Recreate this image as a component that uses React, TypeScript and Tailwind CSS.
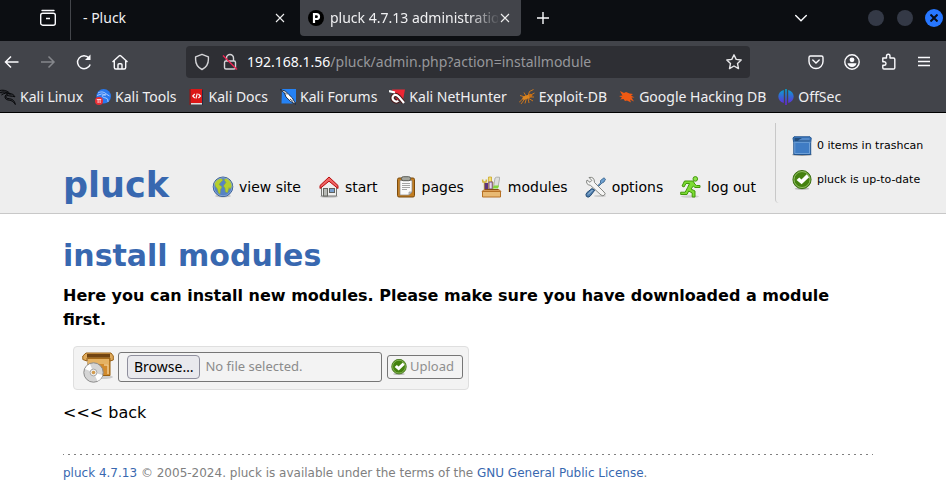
import { type ReactNode } from "react";

const uiFont = "font-['Noto_Sans',sans-serif]";

function Svg({ size = 18, box = 18, className = "", children }: { size?: number; box?: number; className?: string; children: ReactNode }) {
  return (
    <svg width={size} height={size} viewBox={`0 0 ${box} ${box}`} className={`shrink-0 ${className}`} fill="none" aria-hidden="true">
      {children}
    </svg>
  );
}

function CheckIcon({ size = 20 }: { size?: number }) {
  return (
    <Svg size={size} box={22}>
      <ellipse cx="11" cy="20.5" rx="8" ry="1.5" fill="#bbb" />
      <circle cx="11" cy="10.5" r="10" fill="#44820f" stroke="#376b0c" />
      <circle cx="11" cy="10.5" r="8.8" stroke="#9bc56d" strokeWidth="1" />
      <path d="M5 11 L8 8.3 L10.4 10.4 L16.2 4.8 L18.8 8 L10.6 15.8 Z" fill="#fff" />
    </Svg>
  );
}

function GlobeIcon() {
  return (
    <Svg size={22} box={22}>
      <ellipse cx="11" cy="20" rx="8" ry="1.5" fill="#c5c5c5" />
      <circle cx="11" cy="10.8" r="9.8" fill="#5683c4" stroke="#3b5f96" />
      <path d="M2.5 7 L5 4 L9 2.5 L11 4 L8.5 6.5 L7 8.5 L10 11 L8.5 13.5 L8 18 L6.5 17 L5.5 13 L3.5 10.5 Z M12 3.5 L15 2.5 L18.5 5.5 L20 10 L18 13 L17 11.5 L15.5 16.5 L13.5 16 L13 12 L11.5 10 L14 6.5 Z" fill="#b5cf2c" stroke="#91aa35" strokeWidth=".5" />
      <circle cx="11" cy="10.8" r="9" stroke="#9db9df" strokeWidth=".6" />
    </Svg>
  );
}

function HouseIcon() {
  return (
    <Svg size={22} box={22}>
      <ellipse cx="11" cy="20.5" rx="9" ry="1.3" fill="#c5c5c5" />
      <path d="M3.5 9 L11 3 L18.5 9 V20 H3.5 Z" fill="#f0f0ef" stroke="#747572" />
      <path d="M2 9.5 L11 1 L20 9.5 V12.5 L11 5.2 L2 12.5 Z" fill="#ef6464" stroke="#b90c0c" strokeLinejoin="round" />
      <rect x="5.5" y="12.5" width="4" height="7.5" fill="#b8bab6" stroke="#666862" />
      <rect x="11.5" y="12.5" width="5" height="4" fill="#79a0ce" stroke="#60625e" />
    </Svg>
  );
}

function ClipboardIcon() {
  return (
    <Svg size={22} box={22}>
      <rect x="2.5" y="2" width="17" height="19" rx="1.5" fill="#c17d22" stroke="#7b4a0b" />
      <path d="M5 4.5 H17 V16 L14 19 H5 Z" fill="#fafafa" stroke="#888" strokeWidth=".7" />
      <path d="M17 16 H14 V19 Z" fill="#c9c9c9" stroke="#888" strokeWidth=".6" />
      <rect x="6.5" y=".7" width="9" height="4" rx="1.8" fill="#a4a69e" stroke="#5c5e59" />
      <path d="M7 7.5 H15 M7 9.5 H15 M7 11.5 H15 M7 13.5 H12" stroke="#a4a4a4" />
    </Svg>
  );
}

function ModulesIcon() {
  return (
    <Svg size={22} box={22}>
      <path d="M7.5 1 H10.5 V6 H12 V14 H7 Z" fill="#f2df72" stroke="#c9a526" strokeWidth=".8" />
      <path d="M14 2 Q15 .7 18.5 1.2 V3 L17 11 H12.5 Z" fill="#dedfdd" stroke="#a1a39e" strokeWidth=".8" />
      <path d="M1.5 3.5 L2 6 H5 L5.5 3.5 M3.5 6 V13" stroke="#d1b53a" strokeWidth="1.5" />
      <rect x="3.5" y="7" width="3.5" height="6" fill="#5e347b" />
      <rect x="8" y="6" width="3.2" height="7" fill="#ead6ee" stroke="#63417b" strokeWidth=".9" />
      <path d="M11.5 12.5 L13 9.5 H18 L17 12.5 Z" fill="#83d63a" />
      <path d="M3 13.5 H18 L20 15.5 H1 Z" fill="#d79a54" stroke="#aa651b" strokeWidth=".8" />
      <path d="M1.5 15.5 H19.5 V21 H1.5 Z" fill="#e9ba74" stroke="#b77124" />
      <path d="M4 13.5 H17" stroke="#764413" strokeWidth=".8" />
    </Svg>
  );
}

function ToolsIcon() {
  return (
    <Svg size={22} box={22}>
      <ellipse cx="15" cy="20" rx="6" ry="1" fill="#ccc" />
      <path d="M8 14 L15.5 7 L15.5 4.5 L19 1.8 L20.5 3.2 L19 6 L17 7 L9.5 14.5 Z" fill="#6da0d0" stroke="#315d88" strokeWidth=".8" />
      <path d="M2 16.5 L7 12.5 L9.5 14.5 L5 20.3 Q3 22 1.3 20.3 Q.3 18.3 2 16.5 Z" fill="#4d7dad" stroke="#274d75" />
      <path d="M3 18.5 L7.5 14" stroke="#b4cee5" />
      <path d="M4 1.5 L6.8 4.3 L5 6.3 L2 4 Q.2 8.4 5.5 9.4 L16 19 Q18 20.5 19.5 19 Q21 17.5 19 16 L9.5 6.5 Q9.5 .3 4 1.5 Z" fill="#f5f5f4" stroke="#777975" strokeWidth=".9" />
    </Svg>
  );
}

function RunnerIcon() {
  return (
    <Svg size={22} box={22}>
      <ellipse cx="10" cy="20.5" rx="9" ry="1.3" fill="#cfcfcf" />
      <circle cx="15.3" cy="2.9" r="2.3" fill="#8ee34b" stroke="#42970a" />
      <path d="M4.5 5 H13 L15 8.3 L16.5 9.5 H20 V11.5 H15 L13.3 10 L11 13 L15 15 V21 H12.2 V17 L8.7 15 L7 18.5 H.7 V16.2 H5.2 L7.5 11.7 L9.5 7.5 H6 L4 11 L2 10 Z" fill="#7bdc32" stroke="#42970a" strokeLinejoin="round" />
    </Svg>
  );
}

function TrashIcon() {
  return (
    <Svg size={20} box={20}>
      <ellipse cx="10" cy="18.7" rx="10" ry="1.2" fill="#999" />
      <path d="M1 2 L2 .8 H18 L19.2 2 L18.7 7 V18.5 H1.8 V7 Z" fill="#3f7cc4" stroke="#23558f" strokeLinejoin="round" />
      <path d="M2.5 2 H17.8 V5.5 H2.5 Z" fill="#234e7e" />
      <path d="M10 2 H17.8 V4.5 H6 Z" fill="#548aca" />
      <path d="M1.5 6.3 H18.5 M2.8 7 V17.5 H17.5 V7" stroke="#7aa9dc" strokeWidth=".8" />
    </Svg>
  );
}

function PackageIcon() {
  return (
    <Svg size={32} box={32}>
      <ellipse cx="20" cy="26" rx="11" ry="2" fill="#ccc" />
      <path d="M6 7 H28 V24.5 H6 Z" fill="#d18a2d" stroke="#98600f" />
      <path d="M4 2 H29 L31.3 5 V9 L28 10 V7 H5 V10 L.8 8.5 V5 Z" fill="#dfaa5b" stroke="#996116" />
      <path d="M5 3 H28 V6.5 H5 Z" fill="#714411" />
      <path d="M6 8 H27 V13 H6 Z" fill="#e5b263" />
      <path d="M22 14 H26 V23" stroke="#f0ca8d" strokeWidth="1.5" />
      <circle cx="11.5" cy="21.5" r="9.7" fill="#d5d5d5" stroke="#8b8b8b" />
      <path d="M11.5 21.5 L3 18 A9.2 9.2 0 0 1 8 13 Z M11.5 21.5 L20.5 24 A9.2 9.2 0 0 1 15.5 30 Z" fill="#fff" />
      <circle cx="11.5" cy="21.5" r="3.4" fill="#eee" stroke="#aaa" />
      <circle cx="11.5" cy="21.5" r="1.8" fill="#d29b4d" />
    </Svg>
  );
}

const bookmarks: { label: string; icon: ReactNode }[] = [
  {
    label: "Kali Linux",
    icon: <Svg size={16} box={16}><path d="M0 1.5 C4 .5 8 2 10.5 5 C7 3.5 4 4 1.5 6 M0 3.8 C3 2.3 6 3 9 4.5 M9 4.8 L12.5 5 L15 7.8 L12.5 7.3 L9.5 7 C5 5.3 5 9.3 8 9.5 C12 9.8 14.5 11 15.3 15.5 C13 12 11 11.3 8 11 C4 10.5 4 5.5 8 5" stroke="#08090b" strokeWidth="1" fill="#08090b" fillOpacity=".25" /></Svg>,
  },
  {
    label: "Kali Tools",
    icon: <Svg size={16} box={16}><circle cx="8.7" cy="7.3" r="7.3" fill="#2878ee" /><path d="M3 4 C7 2 9 3 12 5.5 L14.5 7 M2 6.5 Q7 3.5 11 6 M10.5 6 C4 6 8 8.8 11 9 Q13.5 9.5 13 13" stroke="#a9caff" strokeWidth="1" /><circle cx="4" cy="12" r="4" fill="#e92f36" /><path d="M1.8 10.5 H6.2 M3.1 11 V14 M5.1 11 V14" stroke="#fff" strokeWidth=".8" /></Svg>,
  },
  {
    label: "Kali Docs",
    icon: <Svg size={16} box={16}><path d="M1.5 0 H13.5 V14 H1.5 Z" fill="#dc1717" /><path d="M2 14 H13.5 V15.5 H2 Z" fill="#ddd" /><path d="M1 0 V16" stroke="#9e1010" /><path d="M13.5 .5 V16" stroke="#222c45" /><path d="M5.8 5 L3.7 7 L5.8 9 M9.4 5 L11.5 7 L9.4 9 M8.3 4.5 L6.9 9.5" stroke="#fff" strokeWidth="1.1" /></Svg>,
  },
  {
    label: "Kali Forums",
    icon: <Svg size={16} box={16}><path d="M2 0 H16 V13 L12 14.5 H1.5 Z" fill="#2582f4" /><path d="M0 .5 L5.5 2.2 L9 5.7 L12.4 9 L16 15.5 L10.5 12.3 L6 8 L4.5 4 Z" fill="#fff" stroke="#17243a" strokeWidth=".9" /><path d="M5 3.5 L7 5.5 M10 10 L13 12.5" stroke="#192535" strokeWidth=".8" /></Svg>,
  },
  {
    label: "Kali NetHunter",
    icon: <Svg size={16} box={16}><path d="M3 .5 H16 L14 11 H8 Z" fill="#ee2634" /><path d="M14.5 13.5 L10.5 8.5 Q7 4.5 4.7 6.5 Q2.3 9 4.8 11.4 Q7.3 13.5 9.3 11.7" stroke="#4a1717" strokeWidth="4.2" /><path d="M15 14 L10.5 8.5 Q7 4.5 4.7 6.5 Q2.3 9 4.8 11.4 Q7.3 13.5 9.3 11.7 M0 2 L6 3.5" stroke="#fff" strokeWidth="2.2" /></Svg>,
  },
  {
    label: "Exploit-DB",
    icon: <Svg size={16} box={16}><path d="M0 13.5 L4 9.5 M2 15 L6 9.5 M6 14.5 L7.5 9 M10 14 L9 9 L14 12 M6 8 L1 6.5 M7 7 L5 3.5 M9 7 L10.5 2.5 L14.5 .5 M10 7 L15.5 4 M10 8 H15" stroke="#cc761c" strokeWidth="1" /><ellipse cx="7.5" cy="8.2" rx="4.5" ry="1.8" transform="rotate(-22 7.5 8.2)" fill="#dc8620" /><circle cx="11.5" cy="6.5" r="1.8" fill="#c97014" /></Svg>,
  },
  {
    label: "Google Hacking DB",
    icon: <Svg size={16} box={16}><path d="M1 2 L5 4 L7 3 L10.5 4.5 L14 5 L12 6.5 L15.5 8.5 L12.5 8.5 L15 12.5 L11 10.5 L12 13.5 L8 11.5 L6 12 L4.5 10 L1 10.5 L3 8.5 L0 7 L3.5 6.5 L2 4 Z" fill="#f15a13" /></Svg>,
  },
  {
    label: "OffSec",
    icon: (
      <Svg size={16} box={16}>
        <defs><linearGradient id="offsec" x1="0" y1="0" x2="0" y2="1"><stop stopColor="#05a5d0" /><stop offset="1" stopColor="#6b20d9" /></linearGradient></defs>
        <path d="M5.8 1 V14 C-1.5 12 -1.5 3 5.8 1 Z M10.2 1 V14 C17.5 12 17.5 3 10.2 1 Z M7.2 0 H8.8 V16 H7.2 Z" fill="url(#offsec)" />
      </Svg>
    ),
  },
];

const nav: { label: string; icon: ReactNode }[] = [
  { label: "view site", icon: <GlobeIcon /> },
  { label: "start", icon: <HouseIcon /> },
  { label: "pages", icon: <ClipboardIcon /> },
  { label: "modules", icon: <ModulesIcon /> },
  { label: "options", icon: <ToolsIcon /> },
  { label: "log out", icon: <RunnerIcon /> },
];

function CloseIcon() {
  return <Svg size={10} box={10}><path d="M1 1 L9 9 M9 1 L1 9" stroke="#eee" strokeWidth="1.1" /></Svg>;
}

function TabBar() {
  return (
    <div className="flex h-[41px] items-start bg-[#0c0e12]">
      <div className="flex h-10 w-[71px] items-start justify-end border-r border-[#44464b] pr-[13px]">
        <button aria-label="Firefox View" className="flex h-9 items-center">
          <Svg><path d="M3 1.5 H15" stroke="#fbfbfe" strokeWidth="1.4" strokeLinecap="round" /><rect x="1.7" y="4.2" width="14.6" height="12" rx="2" stroke="#fbfbfe" strokeWidth="1.4" /><path d="M7 9.5 H11" stroke="#fbfbfe" strokeWidth="1.5" /></Svg>
        </button>
      </div>
      <div className="flex h-9 w-[229px] items-center justify-between pr-[15px] pl-3">
        <span>- Pluck</span>
        <button aria-label="Close tab"><CloseIcon /></button>
      </div>
      <div className="flex h-9 w-[221px] items-center rounded-b bg-[#42444a] pr-[11px] pl-2">
        <Svg size={16} box={16}><circle cx="8" cy="8" r="8" fill="#000" /><path d="M6 13 V4.2 H8.3 Q11 4.2 11 6.7 Q11 9 8.3 9 H6" stroke="#fff" strokeWidth="2.2" /></Svg>
        <span className="mr-0.5 ml-1.5 min-w-0 flex-1 overflow-hidden whitespace-nowrap [mask-image:linear-gradient(to_right,black_138px,transparent_170px)]">pluck 4.7.13 administration</span>
        <button aria-label="Close tab"><CloseIcon /></button>
      </div>
      <button aria-label="New tab" className="ml-4 flex h-9 items-center">
        <Svg size={12} box={12}><path d="M6 0 V12 M0 6 H12" stroke="#fbfbfe" strokeWidth="1.4" /></Svg>
      </button>
      <div className="ml-auto flex h-9 items-center">
        <button aria-label="List all tabs" className="mr-[61px]">
          <Svg size={12} box={12}><path d="M.7 3.5 L6 8.7 L11.3 3.5" stroke="#fbfbfe" strokeWidth="1.4" strokeLinecap="round" /></Svg>
        </button>
        <button aria-label="Minimize" className="mr-[13px] size-4 rounded-full bg-[#343946]" />
        <button aria-label="Maximize" className="mr-3 size-4 rounded-full bg-[#343946]" />
        <button aria-label="Close window" className="mr-[3px] flex size-[18px] items-center justify-center rounded-full bg-[#2777ff]">
          <Svg size={8} box={8}><path d="M.5 .5 L7.5 7.5 M7.5 .5 L.5 7.5" stroke="#080d18" strokeWidth="2" /></Svg>
        </button>
      </div>
    </div>
  );
}

function Toolbar() {
  return (
    <div className="flex h-[41px] items-center pr-[13px] pl-[3px]">
      <div className="flex w-[183px] items-center gap-[18px]">
        <button aria-label="Back"><Svg><path d="M15.5 9 H2.5 M8 3.5 L2.5 9 L8 14.5" stroke="#fbfbfe" strokeWidth="1.5" /></Svg></button>
        <button aria-label="Forward" disabled><Svg><path d="M2 9 H15 M9.5 3.5 L15 9 L9.5 14.5" stroke="#85878c" strokeWidth="1.5" /></Svg></button>
        <button aria-label="Reload"><Svg><path d="M14 5 A6.5 6.5 0 1 0 15.2 11.4" stroke="#fbfbfe" strokeWidth="1.5" /><path d="M15.5 1.5 V7 H10 Z" fill="#fbfbfe" /></Svg></button>
        <button aria-label="Home"><Svg><path d="M1.5 9 L8.3 2.7 Q9 2.1 9.7 2.7 L16.5 9 M3.3 8 V14.5 Q3.3 16 4.8 16 H13.2 Q14.7 16 14.7 14.5 V8 M7 16 V11.8 Q7 10.7 8.1 10.7 H9.9 Q11 10.7 11 11.8 V16" stroke="#fbfbfe" strokeWidth="1.4" /></Svg></button>
      </div>
      <div className="flex h-8 min-w-0 flex-1 items-center rounded bg-[#2e2f34] px-[7px]">
        <Svg><path d="M9 1.3 L15.4 3.8 V6.5 Q15.4 13.3 9 16.5 Q2.6 13.3 2.6 6.5 V3.8 Z" stroke="#d5d5d8" strokeWidth="1.4" strokeLinejoin="round" /></Svg>
        <Svg className="ml-2.5"><path d="M5.5 8 V5 A3.5 3.5 0 0 1 12.5 5 V8" stroke="#d5d5d8" strokeWidth="1.4" /><rect x="3.5" y="8" width="11" height="8" rx="1.5" stroke="#d5d5d8" strokeWidth="1.4" /><path d="M2 2.5 L16 16.5" stroke="#f02454" strokeWidth="1.4" /></Svg>
        <div className="ml-2 flex-1 text-[#fbfbfe]">192.168.1.56<span className="text-[#96979b]">/pluck/admin.php?action=installmodule</span></div>
        <button aria-label="Bookmark this page"><Svg><path d="M9 1.8 L11.2 6.4 L16.2 7 L12.5 10.4 L13.5 15.6 L9 13 L4.5 15.6 L5.5 10.4 L1.8 7 L6.8 6.4 Z" stroke="#e7e7e9" strokeWidth="1.4" strokeLinejoin="round" /></Svg></button>
      </div>
      <div className="ml-[57px] flex items-center gap-[18px]">
        <button aria-label="Save to Pocket"><Svg><path d="M3.5 3 H14.5 Q16 3 16 4.5 V8.5 A7 7 0 0 1 2 8.5 V4.5 Q2 3 3.5 3 Z M5.8 7 L9 10 L12.2 7" stroke="#fbfbfe" strokeWidth="1.4" strokeLinecap="round" /></Svg></button>
        <button aria-label="Account"><Svg><circle cx="9" cy="9" r="7.2" stroke="#fbfbfe" strokeWidth="1.4" /><circle cx="9" cy="6.8" r="2.4" fill="#fbfbfe" /><path d="M4.5 10.2 H13.5 Q12.5 14 9 14 Q5.5 14 4.5 10.2 Z" fill="#fbfbfe" /></Svg></button>
        <button aria-label="Extensions"><Svg><path d="M3.8 5 H7.5 V3.2 Q7.5 1.3 9.3 1.3 Q11 1.3 11 3.2 V5 H14.5 Q15.8 5 15.8 6.3 V14.7 Q15.8 16 14.5 16 H5 Q3.8 16 3.8 14.7 V12.3 H5.3 Q7 12.3 7 10.5 Q7 8.7 5.3 8.7 H3.8 Z" stroke="#fbfbfe" strokeWidth="1.4" strokeLinejoin="round" /></Svg></button>
        <button aria-label="Application menu"><Svg><path d="M3 4.5 H15 M3 8.5 H15 M3 12.5 H15" stroke="#fbfbfe" strokeWidth="1.4" /></Svg></button>
      </div>
    </div>
  );
}

export default function App() {
  return (
    <div className="min-h-screen bg-white font-['DejaVu_Sans',sans-serif] text-black">
      <div className={`${uiFont} overflow-hidden border-b border-black bg-[#42444a] text-sm leading-5 text-[#f0f0f2]`}>
        <TabBar />
        <Toolbar />
        <nav aria-label="Bookmarks" className="flex h-[30px] items-center gap-3 whitespace-nowrap">
          {bookmarks.map((b) => (
            <a key={b.label} href="#" className="flex items-center gap-1">
              {b.icon}
              {b.label}
            </a>
          ))}
        </nav>
      </div>

      <header className="flex h-[101px] border-b border-[#c8c8c8] bg-[#eee] pl-[63px]">
        <div className="w-[149px] pt-[51px] text-[35px] leading-[42px] font-bold text-[#3868b0]">pluck</div>
        <nav aria-label="Main" className="flex items-center gap-[17px] pt-12 text-sm whitespace-nowrap">
          {nav.map((n) => (
            <a key={n.label} href="#" className="flex items-center gap-[5px]">
              {n.icon}
              {n.label}
            </a>
          ))}
        </nav>
        <div className="mt-2.5 ml-auto flex h-20 w-[171px] flex-col justify-center gap-3.5 rounded-bl border-l border-[#c8c8c8] pl-4 text-[11px] whitespace-nowrap">
          <a href="#" className="flex items-center gap-[5px]"><TrashIcon />0 items in trashcan</a>
          <a href="#" className="flex items-center gap-[5px]"><CheckIcon />pluck is up-to-date</a>
        </div>
      </header>

      <main className="mr-[73px] ml-[63px] pt-[22px]">
        <h1 className="text-[30px] leading-10 font-bold text-[#3868b0]">install modules</h1>
        <p className="mt-2 text-base leading-6 font-bold">Here you can install new modules. Please make sure you have downloaded a module first.</p>
        <form className={`${uiFont} mt-[14px] ml-2.5 flex h-11 w-[396px] items-center rounded-sm border border-[#dfdfdf] bg-[#f3f3f3] px-[5px] pb-0.5 text-[13px]`} onSubmit={(e) => e.preventDefault()}>
          <div className="mr-1 ml-[3px]"><PackageIcon /></div>
          <label className="flex h-[30px] w-[264px] items-center gap-[5px] rounded-[3px] border border-[#767676] px-2">
            <input type="file" className="sr-only" />
            <span className="flex h-6 items-center rounded border border-[#8f8f9d] bg-[#e9e9ed] px-[6px] text-sm">Browse…</span>
            <span className="text-[#8b8b8b]">No file selected.</span>
          </label>
          <button type="submit" className="ml-[5px] flex h-6 w-[76px] items-center gap-[3px] rounded-[3px] border border-[#767676] px-[3px] text-[#8f8f8f]">
            <CheckIcon size={16} />
            Upload
          </button>
        </form>
        <a href="#" className="mt-[11px] block text-base leading-6">&lt;&lt;&lt; back</a>
        <footer className="mt-[29px] text-xs leading-4 text-[#808080]">
          <div className="mb-[10px] h-px bg-[repeating-linear-gradient(to_right,#808080_0_1px,transparent_1px_5px,#808080_5px_6px)]" />
          <a href="#" className="text-[#3868b0]">pluck 4.7.13</a> © 2005-2024. pluck is available under the terms of the <a href="#" className="text-[#3868b0]">GNU General Public License</a>.
        </footer>
      </main>
    </div>
  );
}
